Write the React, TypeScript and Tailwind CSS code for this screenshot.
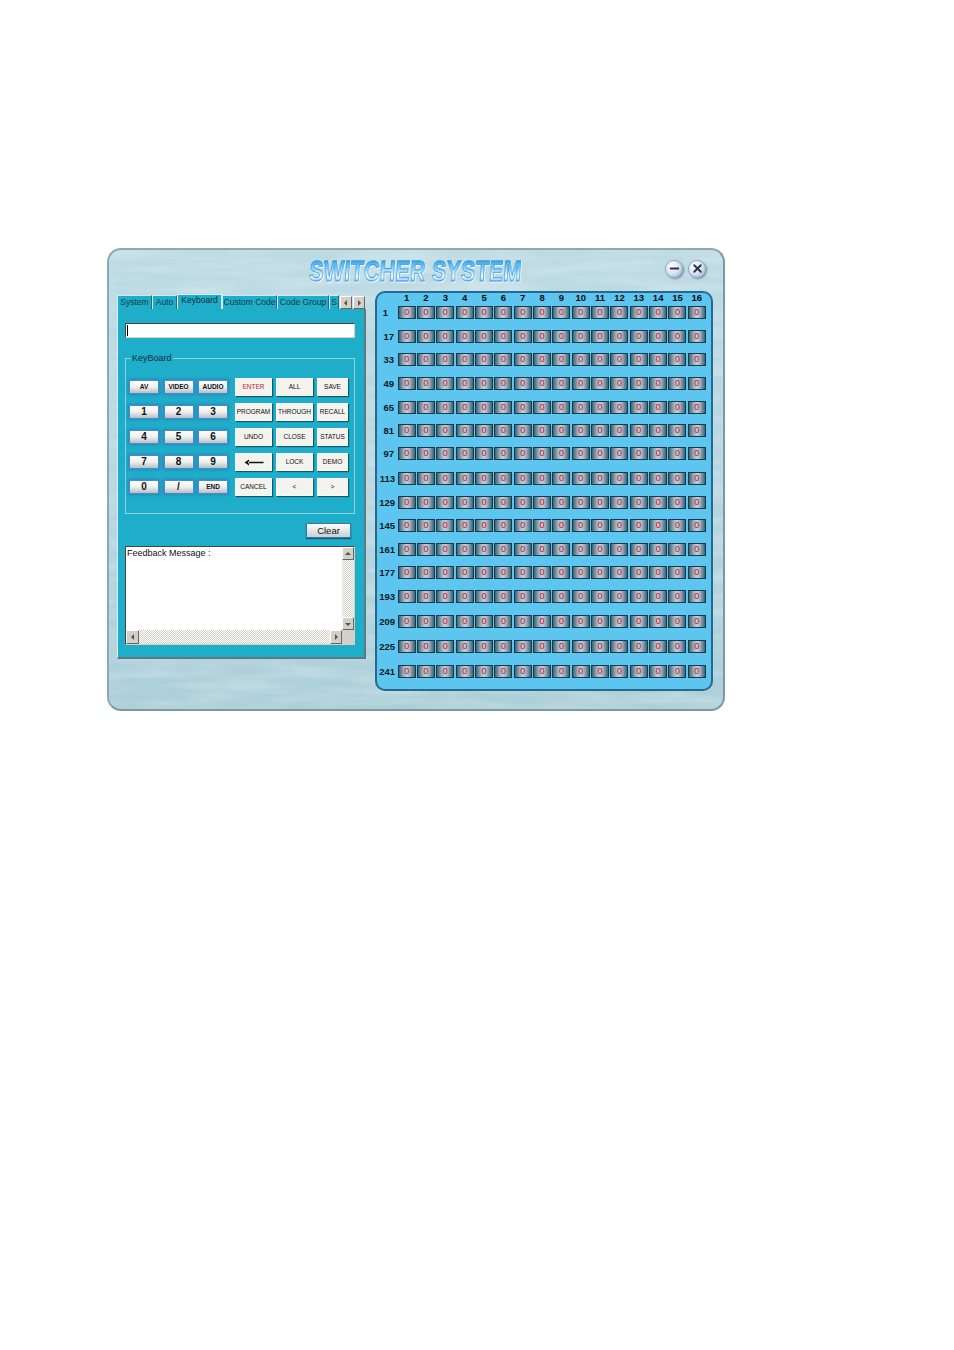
import { Minus, X } from 'lucide-react';

const tabs = [
    { label: 'System', cls: 'w-[35px]' },
    { label: 'Auto', cls: 'w-[25px]' },
    { label: 'Keyboard', cls: 'w-[45px]', active: true },
    { label: 'Custom Code', cls: 'w-[55px]' },
    { label: 'Code Group', cls: 'w-[52px]' },
    { label: 'S', cls: 'w-[10px]' },
];

const numKeys = ['AV', 'VIDEO', 'AUDIO', '1', '2', '3', '4', '5', '6', '7', '8', '9', '0', '/', 'END'];

const cmdKeys = [
    'ENTER', 'ALL', 'SAVE',
    'PROGRAM', 'THROUGH', 'RECALL',
    'UNDO', 'CLOSE', 'STATUS',
    '←', 'LOCK', 'DEMO',
    'CANCEL', '<', '>',
];

const rows = [
    { label: 1, gap: 'mt-[2px]', pad: 'pr-[9px]' },
    { label: 17, gap: 'mt-[11px]', pad: 'pr-[3px]' },
    { label: 33, gap: 'mt-[10px]', pad: 'pr-[3px]' },
    { label: 49, gap: 'mt-[11px]', pad: 'pr-[3px]' },
    { label: 65, gap: 'mt-[11px]', pad: 'pr-[3px]' },
    { label: 81, gap: 'mt-[10px]', pad: 'pr-[3px]' },
    { label: 97, gap: 'mt-[10px]', pad: 'pr-[3px]' },
    { label: 113, gap: 'mt-[12px]', pad: 'pr-[2px]' },
    { label: 129, gap: 'mt-[11px]', pad: 'pr-[2px]' },
    { label: 145, gap: 'mt-[10px]', pad: 'pr-[2px]' },
    { label: 161, gap: 'mt-[11px]', pad: 'pr-[2px]' },
    { label: 177, gap: 'mt-[10px]', pad: 'pr-[2px]' },
    { label: 193, gap: 'mt-[11px]', pad: 'pr-[2px]' },
    { label: 209, gap: 'mt-[12px]', pad: 'pr-[2px]' },
    { label: 225, gap: 'mt-[12px]', pad: 'pr-[2px]' },
    { label: 241, gap: 'mt-[12px]', pad: 'pr-[2px]' },
];

const cols = Array.from({ length: 16 }, (_, i) => i + 1);

function Arrow({ dir }: { dir: 'up' | 'down' | 'left' | 'right' }) {
    const points = {
        up: '4,2 7,5 1,5',
        down: '1,3 7,3 4,6',
        left: '5,1 5,7 2,4',
        right: '3,1 3,7 6,4',
    }[dir];
    return (
        <svg width="8" height="8" viewBox="0 0 8 8">
            <polygon points={points} fill="#555" />
        </svg>
    );
}

function ScrollButton({ dir, className }: { dir: 'up' | 'down' | 'left' | 'right'; className: string }) {
    return (
        <div className={`flex items-center justify-center bg-[#d4d0c8] border border-t-white border-l-white border-r-[#666] border-b-[#666] ${className}`}>
            <Arrow dir={dir} />
        </div>
    );
}

function RoundButton({ children }: { children: React.ReactNode }) {
    return (
        <div className="w-[18px] h-[18px] rounded-full border border-[#8fa6c0] bg-[radial-gradient(circle_at_35%_30%,#ffffff,#d5dff0_55%,#8ea7cc)] flex items-center justify-center text-[#2b3440] shadow-[1px_1px_2px_#6f8ba0]">
            {children}
        </div>
    );
}

export default function App() {
    return (
        <div className="min-h-[1350px] bg-white pt-[248px] pl-[107px] font-['Liberation_Sans',Arial,sans-serif]">
            {/* Window */}
            <div className="relative w-[618px] h-[463px] rounded-[14px] border-2 border-[#8fa9b2] border-r-[#7d98a2] border-b-[#7d98a2] bg-gradient-to-b from-[#bedbe4] via-[#b6d6e0] to-[#adcfd9] overflow-hidden">
                <svg className="absolute inset-0 w-full h-full opacity-30" aria-hidden="true">
                    <filter id="water">
                        <feTurbulence type="fractalNoise" baseFrequency="0.012 0.09" numOctaves="3" seed="4" />
                        <feColorMatrix values="0 0 0 0 1  0 0 0 0 1  0 0 0 0 1  1.6 0 0 0 -0.55" />
                    </filter>
                    <rect width="100%" height="100%" filter="url(#water)" />
                </svg>

                <div className="relative pl-[8px]">
                    {/* Title bar */}
                    <div className="grid grid-cols-[1fr_auto_1fr] items-center h-[41px] pr-[8px]">
                        <div />
                        <div className="w-[214px] flex justify-center">
                            <div className="shrink-0 text-[30px] leading-[32px] font-bold tracking-[0.5px] whitespace-nowrap -skew-x-6 scale-x-[0.71] text-transparent bg-clip-text bg-[linear-gradient(180deg,#2f9fe6_15%,#8fd0f4_40%,#ffffff_68%,#3f9fe0_92%)] [-webkit-text-stroke:1px_#3a9be0] drop-shadow-[1px_1px_0_#f4fbff]">
                                SWITCHER SYSTEM
                            </div>
                        </div>
                        <div className="flex justify-end gap-[5px] pr-[9px] pb-[4px]">
                            <RoundButton><Minus size={13} strokeWidth={3.5} /></RoundButton>
                            <RoundButton><X size={13} strokeWidth={3.5} /></RoundButton>
                        </div>
                    </div>

                    <div className="flex items-start gap-[9px]">
                        {/* Left tab panel */}
                        <div className="w-[249px] mt-[3px]">
                            <div className="flex h-[15px] items-end">
                                {tabs.map((tab) => (
                                    <div
                                        key={tab.label}
                                        className={
                                            tab.active
                                                ? `${tab.cls} h-[15px] bg-[#1eaec9] border-t border-x border-[#d8eef3] text-[8.5px] leading-[10px] text-[#0c2e38] text-center overflow-hidden whitespace-nowrap`
                                                : `${tab.cls} h-[14px] bg-[#1eaec9] border-t border-l border-r border-t-[#cfe9ef] border-l-[#cfe9ef] border-r-[#40606a] text-[8.5px] leading-[12px] text-[#0c3a46] text-center overflow-hidden whitespace-nowrap`
                                        }
                                    >
                                        {tab.label}
                                    </div>
                                ))}
                                <ScrollButton dir="left" className="w-[12px] h-[13px] ml-[1px]" />
                                <ScrollButton dir="right" className="w-[12px] h-[13px] ml-[1px]" />
                            </div>

                            <div className="h-[350px] bg-[#1eaec9] border-l border-l-[#d8eef3] border-r-2 border-b-2 border-r-[#5d7a84] border-b-[#5d7a84] pl-[7px] pt-[14px]">
                                <div className="w-[230px] h-[15px] bg-white border border-t-[#444] border-l-[#444] border-r-[#d4d0c8] border-b-[#d4d0c8] flex items-center pl-[1px]">
                                    <div className="w-[1px] h-[11px] bg-black" />
                                </div>

                                {/* KeyBoard group */}
                                <div className="relative mt-[20px] w-[230px] h-[156px] border border-[#8fd2de] pt-[19px] pl-[4px]">
                                    <span className="absolute -top-[6px] left-[5px] bg-[#1eaec9] px-[1px] text-[9px] leading-[11px] text-[#0c2e38]">KeyBoard</span>
                                    <div className="flex gap-[8px]">
                                        <div className="grid grid-cols-[28px_28px_28px] gap-x-[6.5px] gap-y-[7px]">
                                            {numKeys.map((key) => {
                                                const isDigit = key.length === 1;
                                                return (
                                                    <div key={key} className="h-[18px] py-[3px]">
                                                        <div className={`h-[12px] flex items-center justify-center bg-gradient-to-b from-white via-[#efefef] to-[#b8bec4] shadow-[0_0_0_1px_#3f93c4,0_0_3px_2px_#2f82bd] text-[#111] font-bold leading-none ${isDigit ? 'text-[10px]' : 'text-[6.5px]'}`}>
                                                            {key}
                                                        </div>
                                                    </div>
                                                );
                                            })}
                                        </div>
                                        <div className="grid grid-cols-[37px_37px_31px] gap-x-[4px] gap-y-[7px]">
                                            {cmdKeys.map((key) => (
                                                <div
                                                    key={key}
                                                    className={`h-[18px] flex items-center justify-center bg-[#f4f3ee] border border-[#f8f8f5] shadow-[1px_1px_1px_#0e5a6a] whitespace-nowrap text-[6.5px] leading-none ${key === 'ENTER' ? 'text-[#c8222e]' : 'text-[#111]'}`}
                                                >
                                                    {key === '←' ? (
                                                        <svg width="20" height="7" viewBox="0 0 20 7">
                                                            <path d="M5 0.5 L0.5 3.5 L5 6.5 Z M4 2.8 H19.5 V4.2 H4 Z" fill="#111" />
                                                        </svg>
                                                    ) : key}
                                                </div>
                                            ))}
                                        </div>
                                    </div>
                                </div>

                                <div className="flex justify-end w-[226px] mt-[9px]">
                                    <div className="w-[45px] h-[15px] flex items-center justify-center bg-gradient-to-b from-white to-[#c9ced2] border border-[#2f7fa8] shadow-[0_1px_1px_#14566e] text-[9.5px] leading-none text-[#111]">
                                        Clear
                                    </div>
                                </div>

                                {/* Feedback box */}
                                <div className="mt-[8px] w-[230px] h-[99px] grid grid-cols-[1fr_12px] grid-rows-[1fr_14px] bg-white border border-t-[#444] border-l-[#444] border-r-[#d4d0c8] border-b-[#d4d0c8]">
                                    <div className="pl-[1px] text-[9px] leading-[12px] text-[#111]">Feedback Message :</div>
                                    <div className="flex flex-col justify-between bg-[repeating-conic-gradient(#d4d0c8_0_25%,#ffffff_0_50%)] bg-[length:2px_2px]">
                                        <ScrollButton dir="up" className="h-[13px]" />
                                        <ScrollButton dir="down" className="h-[13px]" />
                                    </div>
                                    <div className="flex justify-between bg-[repeating-conic-gradient(#d4d0c8_0_25%,#ffffff_0_50%)] bg-[length:2px_2px]">
                                        <ScrollButton dir="left" className="w-[13px]" />
                                        <ScrollButton dir="right" className="w-[12px]" />
                                    </div>
                                    <div className="bg-[#d4d0c8]" />
                                </div>
                            </div>
                        </div>

                        {/* Right matrix panel */}
                        <div className="w-[338px] h-[400px] rounded-[10px] border-2 border-[#27688e] bg-[#5cc5f0]">
                            <div className="grid grid-cols-[20px_repeat(16,19.35px)] h-[11px] items-center">
                                <div />
                                {cols.map((col) => (
                                    <div key={col} className="-mt-[2px] text-center text-[9.5px] leading-[11px] font-bold text-[#0a0a0a]">{col}</div>
                                ))}
                            </div>
                            {rows.map((row) => (
                                <div key={row.label} className={`grid grid-cols-[20px_repeat(16,19.35px)] items-center h-[13px] ${row.gap}`}>
                                    <div className={`text-right text-[9.5px] leading-none font-bold text-[#0c1a22] whitespace-nowrap ${row.pad}`}>{row.label}</div>
                                    {cols.map((col) => (
                                        <div key={col} className="flex justify-center">
                                            <div className="w-[18px] h-[13px] flex items-center justify-center border border-[#123c50] bg-[linear-gradient(90deg,#3f6072,#9db1bb_30%,#c2d0d6_50%,#9db1bb_70%,#3f6072)] text-[9px] leading-none text-[#d0103a]">
                                                0
                                            </div>
                                        </div>
                                    ))}
                                </div>
                            ))}
                        </div>
                    </div>
                </div>
            </div>
        </div>
    );
}
